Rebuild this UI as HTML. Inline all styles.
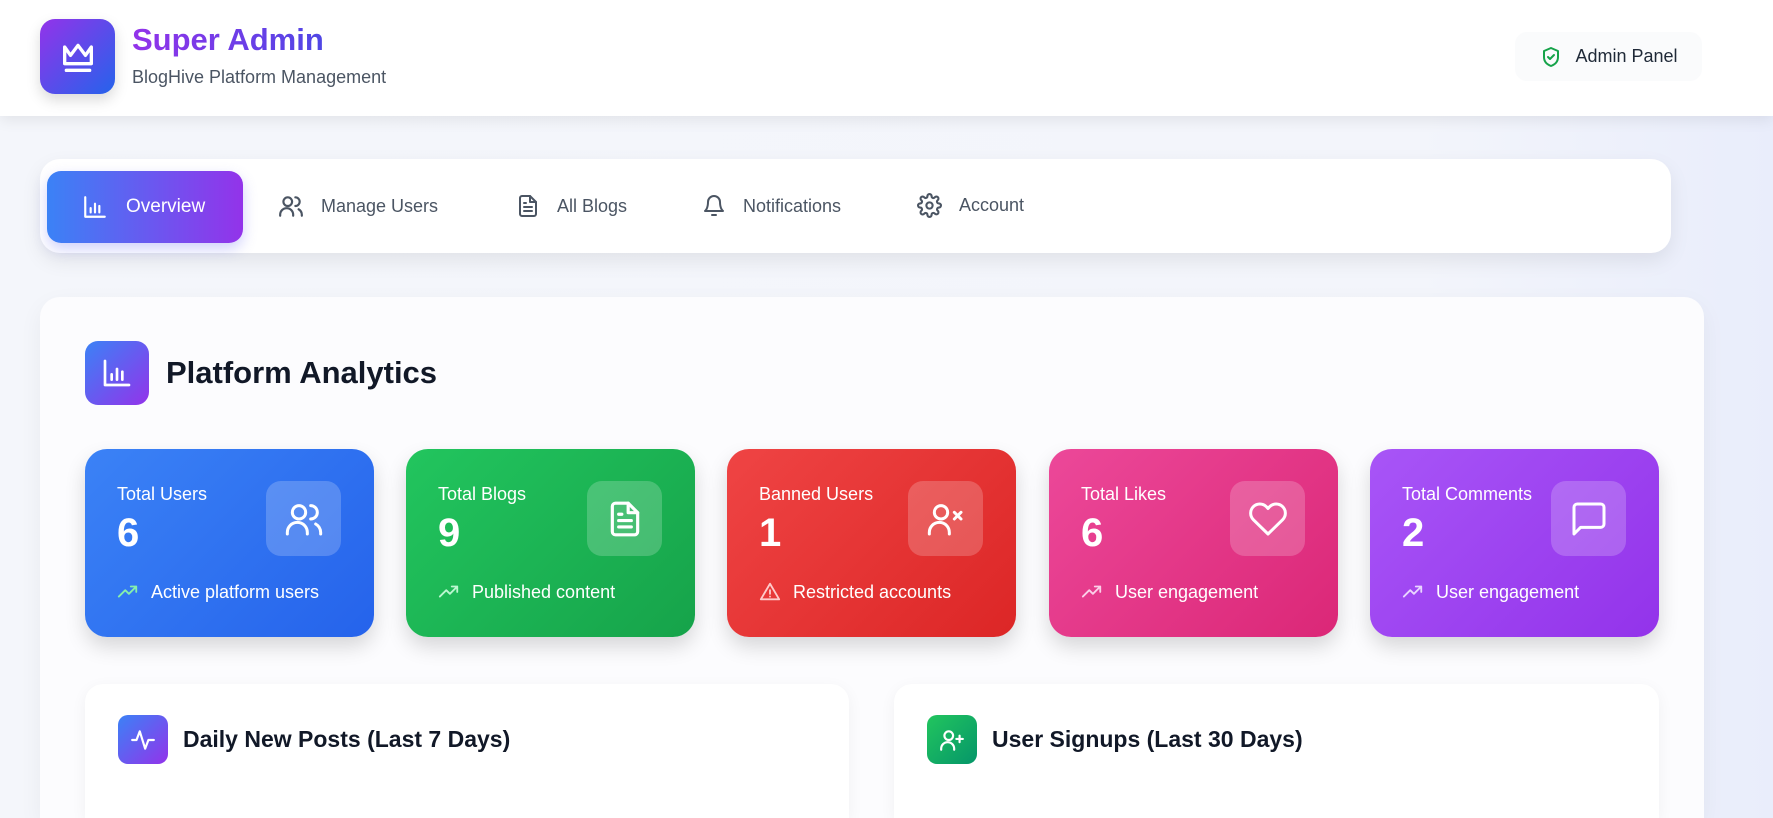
<!DOCTYPE html>
<html style="overflow:hidden;width:1773px;height:818px"><head><meta charset="utf-8"><style>
*{box-sizing:border-box;margin:0;padding:0}
html,body{width:1773px;height:818px;overflow:hidden}
body{font-family:"Liberation Sans",sans-serif}
#w{position:relative;width:1773px;height:818px;overflow:hidden;background:linear-gradient(90deg,#f4f6fb 0%,#f3f5fb 80%,#e9edfb 100%)}
.abs{position:absolute}
header{position:absolute;left:0;top:0;width:1773px;height:116px;background:#fff;box-shadow:0 4px 14px rgba(0,0,0,.08)}
.logo{left:40px;top:19px;width:75px;height:75px;border-radius:15px;background:linear-gradient(135deg,#9333ea,#2563eb);box-shadow:0 6px 14px rgba(0,0,0,.15);display:flex;align-items:center;justify-content:center}
.title{left:132px;top:22px;font-size:31px;font-weight:bold;background:linear-gradient(90deg,#9333ea,#4f46e5);-webkit-background-clip:text;color:transparent}
.sub{left:132px;top:67px;font-size:18px;color:#4b5563}
.pill{left:1515px;top:32px;width:187px;height:49px;border-radius:12px;background:#fafbfc;display:flex;align-items:center;justify-content:center;gap:12px;font-size:18px;color:#1f2937}
.nav{left:40px;top:159px;width:1631px;height:94px;background:#fff;border-radius:20px;box-shadow:0 8px 20px rgba(0,0,0,.08)}
.ov{left:47px;top:171px;width:196px;height:72px;border-radius:14px;background:linear-gradient(90deg,#3b82f6,#9333ea);box-shadow:0 6px 14px rgba(99,102,241,.3);color:#fff;font-size:19px;display:flex;align-items:center;padding-left:35px;gap:18px}
.ni{top:193px;display:flex;align-items:center;gap:17px;font-size:18px;color:#4b5563}
.main{left:40px;top:297px;width:1664px;height:521px;background:#fcfcfe;border-radius:20px 20px 0 0;box-shadow:0 8px 24px rgba(0,0,0,.05)}
.aicon{left:85px;top:341px;width:64px;height:64px;border-radius:13px;background:linear-gradient(135deg,#3b82f6,#9333ea);display:flex;align-items:center;justify-content:center}
.h2{left:166px;top:355px;font-size:31px;font-weight:bold;color:#111827}
.card{top:449px;width:289px;height:188px;border-radius:22px;color:#fff;box-shadow:0 10px 20px rgba(0,0,0,.15)}
.card .l{position:absolute;left:32px;top:35px;font-size:18px}
.card .n{position:absolute;left:32px;top:62px;font-size:40px;font-weight:bold}
.card .ib{position:absolute;right:33px;top:32px;width:75px;height:75px;border-radius:15px;background:rgba(255,255,255,.2);display:flex;align-items:center;justify-content:center}
.card .f{position:absolute;left:32px;top:132px;font-size:18px;display:flex;align-items:center;gap:12px}
.bc{top:684px;height:134px;background:#fff;border-radius:18px 18px 0 0;box-shadow:0 4px 16px rgba(0,0,0,.05)}
.bi{position:absolute;left:33px;top:31px;width:50px;height:49px;border-radius:10px;display:flex;align-items:center;justify-content:center}
.bt{position:absolute;left:98px;top:42px;font-size:23px;font-weight:bold;color:#111827}
svg{fill:none;stroke-linecap:round;stroke-linejoin:round}
</style></head><body><div id="w">
<header></header>
<div class="abs logo"><svg width="40" height="40" viewBox="0 0 24 24" stroke="#fff" stroke-width="2"><path d="M4 6l3.5 5L12 5l4.5 6L20 6v10H4z"/><path d="M5 20h14"/></svg></div>
<div class="abs title">Super Admin</div>
<div class="abs sub">BlogHive Platform Management</div>
<div class="abs pill"><svg width="24" height="24" viewBox="0 0 24 24" stroke="#16a34a" stroke-width="2"><path d="M12 3l7 3v6c0 4.5-3 7.5-7 9-4-1.5-7-4.5-7-9V6z"/><path d="M9 12l2 2 4-4"/></svg>Admin Panel</div>
<div class="abs nav"></div>
<div class="abs ov"><svg width="26" height="26" viewBox="0 0 24 24" stroke="#fff" stroke-width="2"><path d="M3 3v18h18M8 17v-4M12 17V9M16 17v-6"/></svg>Overview</div>
<div class="abs ni" style="left:278px"><svg width="26" height="26" viewBox="0 0 24 24" stroke="#4b5563" stroke-width="2"><circle cx="9" cy="8" r="4"/><path d="M2 21v-1a6 6 0 0 1 12 0v1M16 4a4 4 0 0 1 0 8M22 21v-1a6 6 0 0 0-3-5"/></svg>Manage Users</div>
<div class="abs ni" style="left:516px"><svg width="24" height="26" viewBox="0 0 24 24" stroke="#4b5563" stroke-width="2"><path d="M14 2H6a2 2 0 0 0-2 2v16a2 2 0 0 0 2 2h12a2 2 0 0 0 2-2V8z"/><path d="M14 2v6h6M8 13h8M8 17h8M8 9h2"/></svg>All Blogs</div>
<div class="abs ni" style="left:702px"><svg width="24" height="26" viewBox="0 0 24 24" stroke="#4b5563" stroke-width="2"><path d="M6 8a6 6 0 0 1 12 0c0 7 3 9 3 9H3s3-2 3-9M10 21h4"/></svg>Notifications</div>
<div class="abs ni" style="left:917px"><svg width="25" height="25" viewBox="0 0 24 24" stroke="#4b5563" stroke-width="2"><circle cx="12" cy="12" r="3"/><path d="M19.4 15a1.7 1.7 0 0 0 .3 1.8l.1.1a2 2 0 1 1-2.8 2.8l-.1-.1a1.7 1.7 0 0 0-2.9 1.2V21a2 2 0 1 1-4 0v-.1a1.7 1.7 0 0 0-2.9-1.2l-.1.1a2 2 0 1 1-2.8-2.8l.1-.1A1.7 1.7 0 0 0 3 14H3a2 2 0 1 1 0-4h.1a1.7 1.7 0 0 0 1.2-2.9l-.1-.1a2 2 0 1 1 2.8-2.8l.1.1A1.7 1.7 0 0 0 10 3V3a2 2 0 1 1 4 0v.1a1.7 1.7 0 0 0 2.9 1.2l.1-.1a2 2 0 1 1 2.8 2.8l-.1.1A1.7 1.7 0 0 0 21 10h0a2 2 0 1 1 0 4h-.1a1.7 1.7 0 0 0-1.5 1z"/></svg>Account</div>
<div class="abs main"></div>
<div class="abs aicon"><svg width="32" height="32" viewBox="0 0 24 24" stroke="#fff" stroke-width="2"><path d="M3 3v18h18M8 17v-4M12 17V9M16 17v-6"/></svg></div>
<div class="abs h2">Platform Analytics</div>

<div class="abs card" style="left:85px;background:linear-gradient(135deg,#3b82f6,#2563eb)"><div class="l">Total Users</div><div class="n">6</div><div class="ib"><svg width="40" height="40" viewBox="0 0 24 24" stroke="#fff" stroke-width="1.8"><circle cx="9" cy="8" r="4"/><path d="M2 21v-1a6 6 0 0 1 12 0v1M16 4a4 4 0 0 1 0 8M22 21v-1a6 6 0 0 0-3-5"/></svg></div><div class="f"><svg width="22" height="22" viewBox="0 0 24 24" stroke="#86efac" stroke-width="2"><path d="M2 17l7-7 4 4 8-8M15 6h6v6"/></svg>Active platform users</div></div>
<div class="abs card" style="left:406px;background:linear-gradient(135deg,#22c55e,#16a34a)"><div class="l">Total Blogs</div><div class="n">9</div><div class="ib"><svg width="38" height="38" viewBox="0 0 24 24" stroke="#fff" stroke-width="2"><path d="M14 2H6a2 2 0 0 0-2 2v16a2 2 0 0 0 2 2h12a2 2 0 0 0 2-2V8z"/><path d="M14 2v6h6M8 13h8M8 17h8M8 9h2"/></svg></div><div class="f"><svg width="22" height="22" viewBox="0 0 24 24" stroke="#bbf7d0" stroke-width="2"><path d="M2 17l7-7 4 4 8-8M15 6h6v6"/></svg>Published content</div></div>
<div class="abs card" style="left:727px;background:linear-gradient(135deg,#ef4444,#dc2626)"><div class="l">Banned Users</div><div class="n">1</div><div class="ib"><svg width="40" height="40" viewBox="0 0 24 24" stroke="#fff" stroke-width="1.8"><circle cx="9" cy="8" r="4"/><path d="M2 21v-1a6 6 0 0 1 12 0v1M17 8l4 4M21 8l-4 4"/></svg></div><div class="f"><svg width="22" height="22" viewBox="0 0 24 24" stroke="#fecaca" stroke-width="2"><path d="M12 3L2 20h20z"/><path d="M12 10v4M12 17h0"/></svg>Restricted accounts</div></div>
<div class="abs card" style="left:1049px;background:linear-gradient(135deg,#ec4899,#db2777)"><div class="l">Total Likes</div><div class="n">6</div><div class="ib"><svg width="40" height="40" viewBox="0 0 24 24" stroke="#fff" stroke-width="1.8"><path d="M20.8 4.6a5.5 5.5 0 0 0-7.8 0L12 5.7l-1-1.1a5.5 5.5 0 0 0-7.8 7.8L12 21l8.8-8.6a5.5 5.5 0 0 0 0-7.8z"/></svg></div><div class="f"><svg width="22" height="22" viewBox="0 0 24 24" stroke="#fbcfe8" stroke-width="2"><path d="M2 17l7-7 4 4 8-8M15 6h6v6"/></svg>User engagement</div></div>
<div class="abs card" style="left:1370px;background:linear-gradient(135deg,#a855f7,#9333ea)"><div class="l">Total Comments</div><div class="n">2</div><div class="ib"><svg width="40" height="40" viewBox="0 0 24 24" stroke="#fff" stroke-width="1.8"><path d="M21 15a2 2 0 0 1-2 2H7l-4 4V5a2 2 0 0 1 2-2h14a2 2 0 0 1 2 2z"/></svg></div><div class="f"><svg width="22" height="22" viewBox="0 0 24 24" stroke="#e9d5ff" stroke-width="2"><path d="M2 17l7-7 4 4 8-8M15 6h6v6"/></svg>User engagement</div></div>

<div class="abs bc" style="left:85px;width:764px"><div class="bi" style="background:linear-gradient(135deg,#3b82f6,#9333ea)"><svg width="26" height="26" viewBox="0 0 24 24" stroke="#fff" stroke-width="2"><path d="M2 12h4l3-8 5 16 3-8h5"/></svg></div><div class="bt">Daily New Posts (Last 7 Days)</div></div>
<div class="abs bc" style="left:894px;width:765px"><div class="bi" style="background:linear-gradient(135deg,#22c55e,#059669)"><svg width="26" height="26" viewBox="0 0 24 24" stroke="#fff" stroke-width="2"><circle cx="9" cy="8" r="4"/><path d="M2 21v-1a6 6 0 0 1 12 0v1M19 8v6M16 11h6"/></svg></div><div class="bt">User Signups (Last 30 Days)</div></div>
</div></body></html>
